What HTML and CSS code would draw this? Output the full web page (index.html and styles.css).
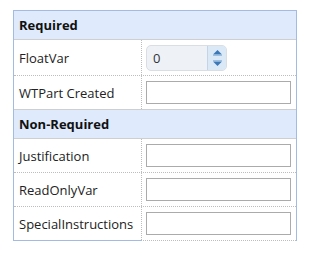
FILE: index.html
```html
<!DOCTYPE html>
<html lang="en">
<head>
  <meta charset="UTF-8" />
  <title>Attributes</title>
  <link rel="stylesheet" href="styles.css">
</head>
<body>

  <div class="panel">
    <div class="section-head">Required</div>

    <div class="row row-tall">
      <div class="label">FloatVar</div>
      <div class="value">
        <div class="spin">
          <span class="spin-text">0</span>
          <span class="spin-btns">
            <svg width="9" height="6" viewBox="0 0 9 6"><path d="M4.5 0 L9 4.5 L0 4.5 Z" fill="#3b78b5"/><rect x="0" y="5" width="9" height="1" fill="#9cc0e3"/></svg>
            <svg width="9" height="6" viewBox="0 0 9 6"><rect x="0" y="0" width="9" height="1" fill="#9cc0e3"/><path d="M0 1.5 L9 1.5 L4.5 6 Z" fill="#3b78b5"/></svg>
          </span>
        </div>
      </div>
    </div>

    <div class="row">
      <div class="label">WTPart Created</div>
      <div class="value"><input type="text" class="field"></div>
    </div>

    <div class="section-head section-top">Non-Required</div>

    <div class="row">
      <div class="label">Justification</div>
      <div class="value"><input type="text" class="field"></div>
    </div>

    <div class="row">
      <div class="label">ReadOnlyVar</div>
      <div class="value"><input type="text" class="field"></div>
    </div>

    <div class="row row-last">
      <div class="label">SpecialInstructions</div>
      <div class="value"><input type="text" class="field"></div>
    </div>
  </div>

</body>
</html>
```

FILE: styles.css
```css
body {
  margin: 0;
  background: white;
  font-family: 'Open Sans', 'Liberation Sans', sans-serif;
  font-size: 13px;
  color: #222;
}

.panel {
  margin: 10px 0 0 13px;
  width: 284px;
  box-sizing: border-box;
  border: 1px solid #a3bbe2;
  border-bottom: none;
}

.section-head {
  height: 28px;
  line-height: 28px;
  padding-left: 5px;
  background: #dfeafc;
  border-bottom: 1px solid #cfcfcf;
  font-weight: bold;
  color: #111;
}

.section-top {
  border-top: 1px solid #cfcfcf;
}

.row {
  display: flex;
  height: 33px;
  border-bottom: 1px dotted #bdbdbd;
}

.row-tall {
  height: 35px;
}

.row + .section-top {
  margin-top: -1px;
}

.label {
  width: 122px;
  padding-left: 5px;
  border-right: 1px dotted #bdbdbd;
  display: flex;
  align-items: center;
}

.row-last .label {
  box-shadow: 0 1px 0 #a3bbe2;
}

.value {
  flex: 1;
  padding-left: 4px;
  display: flex;
  align-items: center;
}

.field {
  margin: 0;
  width: 145px;
  height: 23px;
  box-sizing: border-box;
  border: 1px solid #ababab;
  border-radius: 0;
  padding: 0 4px;
  font: inherit;
}

.spin {
  width: 81px;
  height: 26px;
  box-sizing: border-box;
  display: flex;
  background: #eef2f6;
  border: 1px solid #d9dee4;
  border-radius: 5px;
  overflow: hidden;
}

.spin-text {
  flex: 1;
  padding-left: 6px;
  line-height: 24px;
  color: #333;
}

.spin-btns {
  width: 18px;
  border-left: 1px solid #c3d4e6;
  background: #dbe8f6;
  display: flex;
  flex-direction: column;
  justify-content: center;
  align-items: center;
  gap: 4px;
}

.spin-btns svg {
  display: block;
}
```
